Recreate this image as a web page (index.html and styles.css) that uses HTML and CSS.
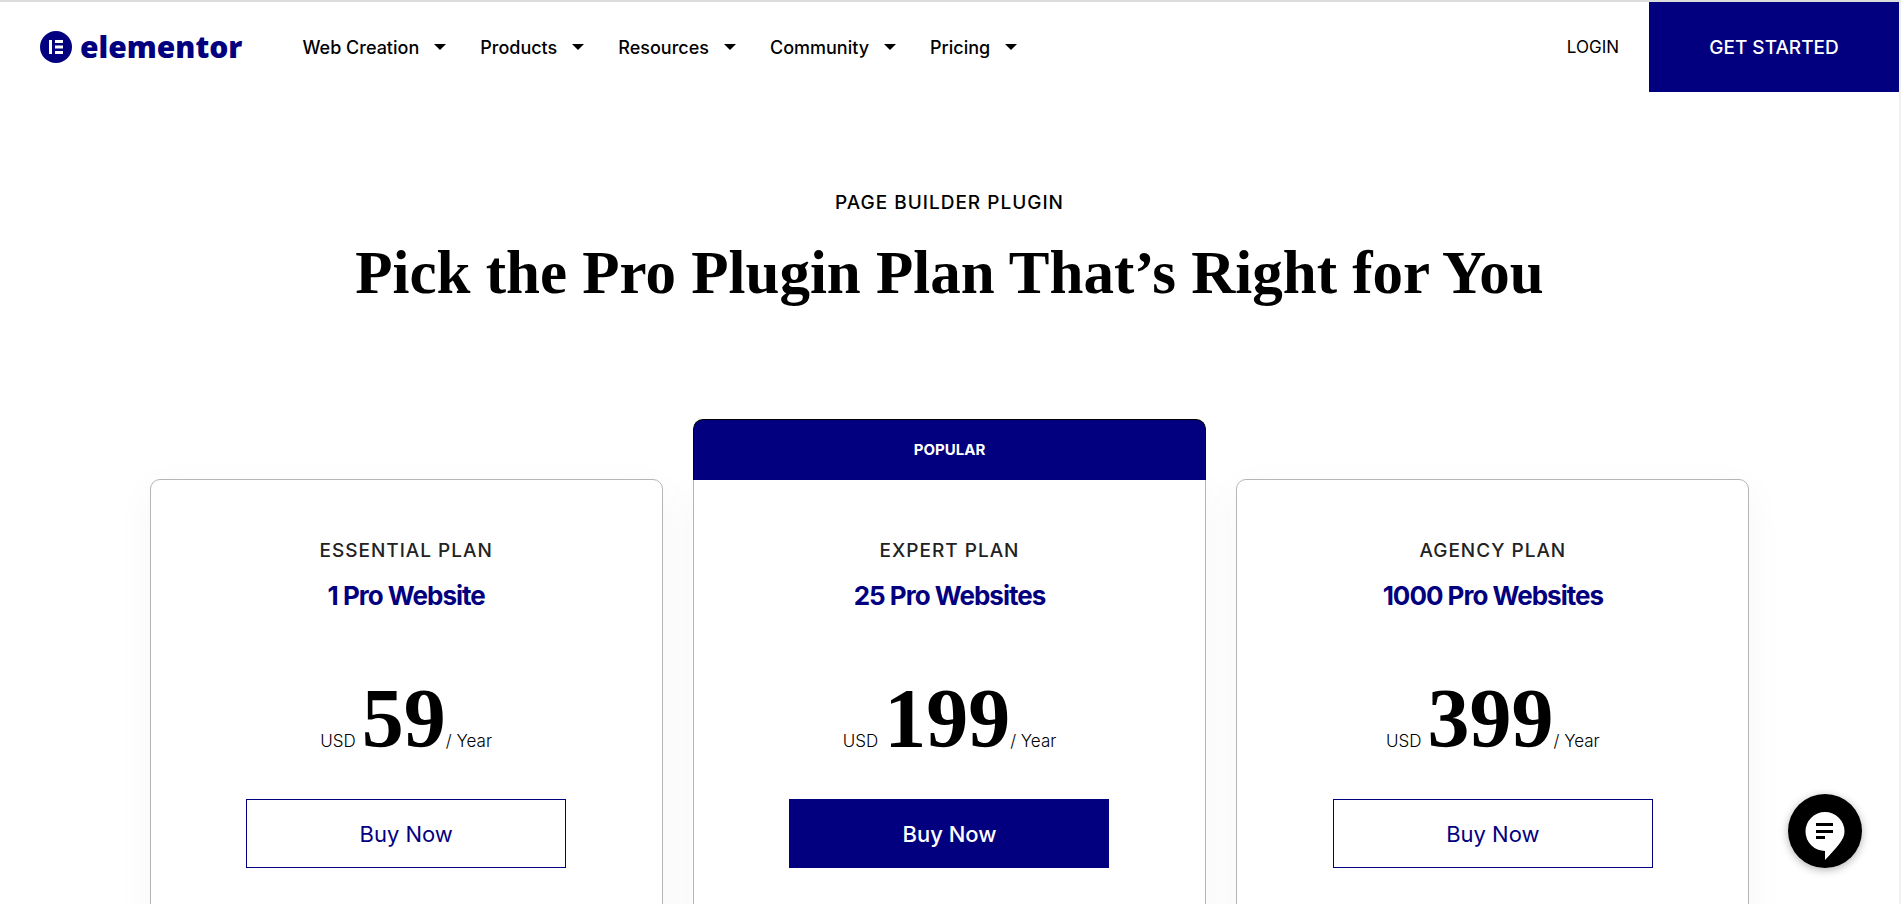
FILE: index.html
```html
<!DOCTYPE html>
<html lang="en">
  <head>
    <meta charset="UTF-8" />
    <meta name="viewport" content="width=device-width, initial-scale=1.0" />
    <title>Elementor Pricing</title>
    <link rel="stylesheet" href="styles.css">
  </head>
  <body>
    <header class="header">
      <a href="#" class="logo">
        <svg class="logo-icon" viewBox="0 0 32 32" aria-hidden="true">
          <circle cx="16" cy="16" r="16" fill="#03007f" />
          <path fill="#fff" d="M9 9h3v14H9zM15 9h8v3h-8zM15 14.500h8v3h-8zM15 20h8v3h-8z" />
        </svg>
        <span>elementor</span>
      </a>
      <nav class="nav">
        <a href="#">Web Creation</a>
        <a href="#">Products</a>
        <a href="#">Resources</a>
        <a href="#">Community</a>
        <a href="#">Pricing</a>
      </nav>
      <a href="#" class="login">LOGIN</a>
      <a href="#" class="get-started">GET STARTED</a>
    </header>

    <main>
      <div class="intro">
        <p class="eyebrow">PAGE BUILDER PLUGIN</p>
        <h1>Pick the Pro Plugin Plan That’s Right for You</h1>
      </div>

      <div class="plans">
        <section class="plan">
          <h2>ESSENTIAL PLAN</h2>
          <p class="sites">1 Pro Website</p>
          <p class="price"><span class="currency">USD</span><span class="amount">59</span><span class="period">/ Year</span></p>
          <button type="button" class="buy">Buy Now</button>
        </section>
        <section class="plan plan-popular">
          <div class="ribbon">POPULAR</div>
          <h2>EXPERT PLAN</h2>
          <p class="sites">25 Pro Websites</p>
          <p class="price"><span class="currency">USD</span><span class="amount">199</span><span class="period">/ Year</span></p>
          <button type="button" class="buy buy-filled">Buy Now</button>
        </section>
        <section class="plan">
          <h2>AGENCY PLAN</h2>
          <p class="sites">1000 Pro Websites</p>
          <p class="price"><span class="currency">USD</span><span class="amount">399</span><span class="period">/ Year</span></p>
          <button type="button" class="buy">Buy Now</button>
        </section>
      </div>
    </main>

    <button type="button" class="chat" aria-label="Open chat">
      <svg viewBox="0 0 74 74" aria-hidden="true">
        <path fill="#fff" d="M37 57A19.500 19.500 0 1 1 56.500 37.500C56.500 46 49 53 37 66z" />
        <path fill="#000" d="M28 29h17v3H28zM28 36h17v3H28zM28 42h9v3h-9z" />
      </svg>
    </button>
  </body>
</html>
```
FILE: styles.css
```css
* {
  box-sizing: border-box;
}
body {
  margin: 0;
  min-height: 100vh;
  border-top: 2px solid #dcdcdc;
  border-right: 2px solid #f1f1f1;
  background-color: #fff;
  font-family: Inter, "Liberation Sans", sans-serif;
  color: #000;
}
a {
  color: inherit;
  text-decoration: none;
}
h1,
h2,
p {
  margin: 0;
}

/* header */
.header {
  display: flex;
  align-items: center;
  height: 90px;
  padding-left: 40px;
}
.logo {
  display: flex;
  align-items: center;
  gap: 8px;
  margin-right: 60px;
  color: #03007f;
  font-family: "Open Sans", sans-serif;
  font-size: 30px;
  font-weight: 800;
  line-height: 32px;
}
.logo-icon {
  width: 32px;
  height: 32px;
}
.nav {
  display: flex;
  gap: 34px;
  font-size: 18px;
  font-weight: 500;
}
.nav a {
  display: flex;
  align-items: center;
  gap: 15px;
}
.nav a::after {
  content: "";
  border: 6px solid transparent;
  border-top-color: #000;
  border-bottom: 0;
}
.login {
  margin-left: auto;
  margin-right: 30px;
  font-size: 17px;
}
.get-started {
  display: flex;
  align-items: center;
  justify-content: center;
  width: 250px;
  height: 100%;
  background-color: #03007f;
  color: #fff;
  font-size: 19px;
  font-weight: 500;
}

/* title */
.intro {
  padding: 99px 20px 0;
  text-align: center;
}
.eyebrow {
  font-size: 19px;
  font-weight: 500;
  line-height: 24px;
  letter-spacing: 1px;
}
h1 {
  margin-top: 20px;
  font-family: "Liberation Serif", serif;
  font-size: 61px;
  font-weight: 700;
  line-height: 76px;
}

/* plans */
.plans {
  display: grid;
  grid-template-columns: repeat(3, 1fr);
  gap: 30px;
  max-width: 1600px;
  margin: 168px auto 0;
}
.plan {
  position: relative;
  display: flex;
  flex-direction: column;
  align-items: center;
  padding: 59px 40px 80px;
  border: 1px solid #b5b5b5;
  border-radius: 10px;
  background-color: #fff;
  box-shadow: 0 10px 40px rgba(0, 0, 0, 0.04);
}
.plan-popular {
  border-top-left-radius: 0;
  border-top-right-radius: 0;
}
.ribbon {
  position: absolute;
  right: -1px;
  bottom: 100%;
  left: -1px;
  height: 61px;
  border: 1px solid #000;
  border-bottom: 0;
  border-radius: 10px 10px 0 0;
  background-color: #03007f;
  color: #fff;
  font-size: 15px;
  font-weight: 700;
  line-height: 60px;
  text-align: center;
}
.plan h2 {
  color: #222;
  font-size: 19px;
  font-weight: 500;
  line-height: 24px;
  letter-spacing: 1px;
}
.sites {
  margin-top: 15px;
  color: #03007f;
  font-size: 26px;
  font-weight: 700;
  line-height: 36px;
  letter-spacing: -1px;
}
.price {
  display: flex;
  align-items: baseline;
  margin-top: 60px;
  font-size: 17px;
  font-weight: 300;
}
.amount {
  margin-left: 6px;
  font-family: "Liberation Serif", serif;
  font-size: 84px;
  font-weight: 700;
  line-height: 90px;
}
.buy {
  width: 320px;
  height: 69px;
  margin-top: 35px;
  border: 1px solid #03007f;
  background-color: #fff;
  color: #03007f;
  font-family: inherit;
  font-size: 22px;
  cursor: pointer;
}
.buy-filled {
  background-color: #03007f;
  color: #fff;
  font-weight: 500;
}

.chat {
  position: fixed;
  right: 39px;
  bottom: 36px;
  width: 74px;
  height: 74px;
  padding: 0;
  border: 0;
  border-radius: 50%;
  background-color: #000;
  box-shadow: 0 2px 8px rgba(0, 0, 0, 0.3);
  cursor: pointer;
}
.chat svg {
  display: block;
}
```
